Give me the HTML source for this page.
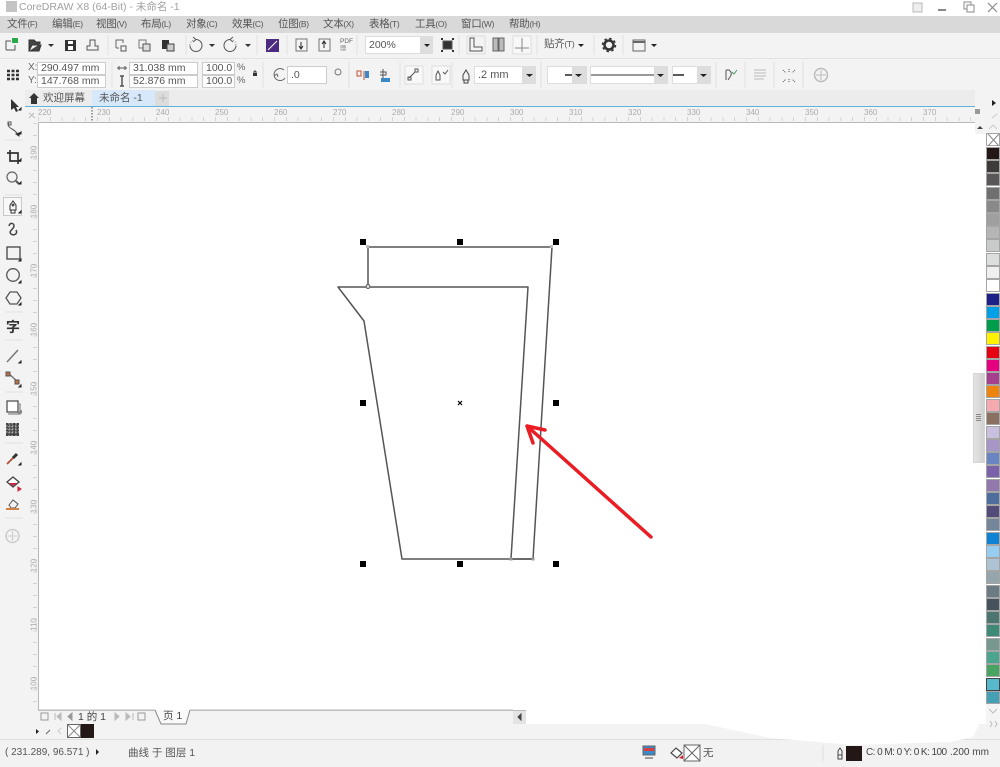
<!DOCTYPE html>
<html><head><meta charset="utf-8"><style>
html,body{margin:0;padding:0;background:#fff}
#p{position:relative;width:1000px;height:767px;overflow:hidden;background:#fff;font-family:"Liberation Sans","Noto Sans CJK SC",sans-serif;color:#444;filter:blur(.3px)}
#p div{position:absolute}
.t{white-space:nowrap;line-height:12px}
.m{top:18px;font-size:10.5px;color:#555;white-space:nowrap;line-height:13px;letter-spacing:-.3px}
.m i{font-style:normal;font-size:8.5px}
.in{background:#fff;border:1px solid #ccc;box-sizing:border-box;font-size:10.5px;line-height:12px;color:#555;padding-left:3px;white-space:nowrap}
.dd{background:#ddd;box-sizing:border-box}
.rh{top:108px;font-size:8px;color:#aaa;line-height:9px}
.rv{left:26px;font-size:8px;color:#aaa;line-height:9px;transform:rotate(-90deg);width:16px;text-align:center}
.s{left:986px;width:14px;height:13px;box-sizing:border-box;border:1px solid #a5a5a5}
svg{position:absolute;left:0;top:0}
</style></head><body><div id="p">
<!-- bars -->
<div style="left:0;top:16px;width:1000px;height:17px;background:#d9d9d9"></div>
<div style="left:0;top:33px;width:1000px;height:25px;background:#f3f3f3;border-bottom:1px solid #e2e2e2"></div>
<div style="left:0;top:59px;width:1000px;height:31px;background:#f3f3f3"></div>
<div style="left:25px;top:90px;width:950px;height:16px;background:#ececec"></div>
<div style="left:25px;top:106px;width:950px;height:1px;background:#5fb3d6"></div>
<div style="left:0;top:90px;width:25px;height:635px;background:#f3f3f3"></div>
<div style="left:25px;top:107px;width:950px;height:15px;background:#f3f3f3"></div>
<div style="left:25px;top:107px;width:13px;height:618px;background:#f3f3f3"></div>
<div style="left:38px;top:122px;width:938px;height:1px;background:#b8b8b8"></div>
<div style="left:38px;top:122px;width:1px;height:588px;background:#b8b8b8"></div>
<div style="left:38px;top:117px;width:937px;height:4px;background:repeating-linear-gradient(90deg,#d4d4d4 0 1px,transparent 1px 11.8px)"></div>
<div style="left:33px;top:123px;width:4px;height:587px;background:repeating-linear-gradient(180deg,#d4d4d4 0 1px,transparent 1px 11.8px)"></div>
<!-- right strip -->
<div style="left:975px;top:90px;width:12px;height:44px;background:#f3f3f3"></div>
<div style="left:986px;top:90px;width:14px;height:43px;background:#f3f3f3"></div>
<div style="left:986px;top:704px;width:14px;height:36px;background:#f5f5f5"></div>
<div style="left:973px;top:373px;width:12px;height:90px;background:linear-gradient(90deg,#e4e4e4,#d0d0d0);border:1px solid #d5d5d5;box-sizing:border-box"></div>
<div style="left:976px;top:414px;width:5px;height:8px;background:repeating-linear-gradient(180deg,#888 0 1px,transparent 1px 2px)"></div>
<!-- title -->
<div style="left:6px;top:1px;width:11px;height:11px;background:#c4c4c4"></div>
<div class="t" style="left:19px;top:1px;font-size:10.5px;color:#a0a0a0">CoreDRAW X8 (64-Bit) - 未命名 -1</div>
<!-- menu -->
<div class="m" style="left:7px">文件<i>(F)</i></div><div class="m" style="left:52px">编辑<i>(E)</i></div><div class="m" style="left:96px">视图<i>(V)</i></div><div class="m" style="left:141px">布局<i>(L)</i></div><div class="m" style="left:186px">对象<i>(C)</i></div><div class="m" style="left:232px">效果<i>(C)</i></div><div class="m" style="left:278px">位图<i>(B)</i></div><div class="m" style="left:323px">文本<i>(X)</i></div><div class="m" style="left:369px">表格<i>(T)</i></div><div class="m" style="left:415px">工具<i>(O)</i></div><div class="m" style="left:461px">窗口<i>(W)</i></div><div class="m" style="left:509px">帮助<i>(H)</i></div>
<!-- toolbar text/inputs -->
<div class="t" style="left:340px;top:38px;font-size:6.5px;line-height:7px;color:#666">PDF<br>▦</div>
<div class="in" style="left:365px;top:36px;width:56px;height:18px;line-height:16px;border-color:#ddd">200%</div>
<div class="dd" style="left:420px;top:36px;width:13px;height:18px"></div>
<div class="m" style="left:544px;top:38px">贴齐<i>(T)</i></div>
<!-- property bar -->
<div class="t" style="left:28px;top:62px;font-size:10px;color:#666">X:</div>
<div class="t" style="left:28px;top:75px;font-size:10px;color:#666">Y:</div>
<div class="in" style="left:37px;top:62px;width:69px;height:13px;line-height:11px">290.497 mm</div>
<div class="in" style="left:37px;top:75px;width:69px;height:13px;line-height:11px">147.768 mm</div>
<div class="in" style="left:129px;top:62px;width:69px;height:13px;line-height:11px">31.038 mm</div>
<div class="in" style="left:129px;top:75px;width:69px;height:13px;line-height:11px">52.876 mm</div>
<div class="in" style="left:202px;top:62px;width:33px;height:13px;line-height:11px">100.0</div>
<div class="in" style="left:202px;top:75px;width:33px;height:13px;line-height:11px">100.0</div>
<div class="t" style="left:237px;top:62px;font-size:9.5px;color:#666">%</div>
<div class="t" style="left:237px;top:75px;font-size:9.5px;color:#666">%</div>
<div class="in" style="left:287px;top:66px;width:40px;height:18px;line-height:16px">.0</div>
<div class="in" style="left:474px;top:66px;width:49px;height:18px;line-height:16px;font-size:11px;border-color:#ddd">.2 mm</div>
<div class="dd" style="left:522px;top:66px;width:14px;height:18px"></div>
<div class="in" style="left:547px;top:66px;width:40px;height:18px;border-color:#ddd"></div>
<div class="dd" style="left:572px;top:66px;width:14px;height:18px"></div>
<div class="in" style="left:590px;top:66px;width:78px;height:18px;border-color:#ddd"></div>
<div class="dd" style="left:654px;top:66px;width:14px;height:18px"></div>
<div class="in" style="left:672px;top:66px;width:39px;height:18px;border-color:#ddd"></div>
<div class="dd" style="left:697px;top:66px;width:14px;height:18px"></div>
<!-- tabs -->
<div style="left:92px;top:90px;width:63px;height:16px;background:#d6e8fa"></div>
<div style="left:155px;top:91px;width:14px;height:15px;background:#dcdcdc"></div>
<div class="t" style="left:43px;top:92px;font-size:10.5px;color:#555">欢迎屏幕</div>
<div class="t" style="left:99px;top:92px;font-size:10.5px;color:#555">未命名 -1</div>
<!-- rulers -->
<div class="rh" style="left:38px">220</div><div class="rh" style="left:97px">230</div><div class="rh" style="left:156px">240</div><div class="rh" style="left:215px">250</div><div class="rh" style="left:274px">260</div><div class="rh" style="left:333px">270</div><div class="rh" style="left:392px">280</div><div class="rh" style="left:451px">290</div><div class="rh" style="left:510px">300</div><div class="rh" style="left:569px">310</div><div class="rh" style="left:628px">320</div><div class="rh" style="left:687px">330</div><div class="rh" style="left:746px">340</div><div class="rh" style="left:805px">350</div><div class="rh" style="left:864px">360</div><div class="rh" style="left:923px">370</div>
<div class="rv" style="top:148px">190</div><div class="rv" style="top:207px">180</div><div class="rv" style="top:266px">170</div><div class="rv" style="top:325px">160</div><div class="rv" style="top:384px">150</div><div class="rv" style="top:443px">140</div><div class="rv" style="top:502px">130</div><div class="rv" style="top:561px">120</div><div class="rv" style="top:620px">110</div><div class="rv" style="top:679px">100</div>
<!-- page nav -->
<div style="left:38px;top:710px;width:488px;height:14px;background:#f3f3f3;border-top:1px solid #bbb;box-sizing:border-box"></div>
<div style="left:513px;top:711px;width:13px;height:13px;background:#e4e4e4"></div>
<!-- bottom -->
<div style="left:0;top:724px;width:1000px;height:16px;background:#f3f3f3"></div>
<div style="left:0;top:739px;width:1000px;height:28px;background:#f2f2f2;border-top:1px solid #e0e0e0;box-sizing:border-box"></div>
<div style="left:67px;top:724px;width:14px;height:14px;background:#fff;border:1px solid #666;box-sizing:border-box"></div>
<div style="left:81px;top:724px;width:13px;height:14px;background:#231815"></div>
<!-- palette -->
<div class="s" style="top:133px;background:#fff"></div>
<div class="s" style="top:147px;background:#231815"></div>
<div class="s" style="top:160px;background:#3e3a39"></div>
<div class="s" style="top:173px;background:#595757"></div>
<div class="s" style="top:187px;background:#717071"></div>
<div class="s" style="top:200px;background:#898989"></div>
<div class="s" style="top:213px;background:#9f9fa0"></div>
<div class="s" style="top:226px;background:#b5b5b6"></div>
<div class="s" style="top:239px;background:#c9caca"></div>
<div class="s" style="top:253px;background:#dcdddd"></div>
<div class="s" style="top:266px;background:#efefef"></div>
<div class="s" style="top:279px;background:#fff"></div>
<div class="s" style="top:293px;background:#1d2088"></div>
<div class="s" style="top:306px;background:#00a0e9"></div>
<div class="s" style="top:319px;background:#009e4c"></div>
<div class="s" style="top:332px;background:#fff100"></div>
<div class="s" style="top:346px;background:#e60012"></div>
<div class="s" style="top:359px;background:#e4007f"></div>
<div class="s" style="top:372px;background:#a4408e"></div>
<div class="s" style="top:385px;background:#ee8310"></div>
<div class="s" style="top:399px;background:#f5aab0"></div>
<div class="s" style="top:412px;background:#8a7060"></div>
<div class="s" style="top:426px;background:#c9bfdf"></div>
<div class="s" style="top:439px;background:#a795c7"></div>
<div class="s" style="top:452px;background:#6a86c2"></div>
<div class="s" style="top:465px;background:#7a62aa"></div>
<div class="s" style="top:479px;background:#9278ac"></div>
<div class="s" style="top:492px;background:#4e6c9c"></div>
<div class="s" style="top:505px;background:#544c78"></div>
<div class="s" style="top:518px;background:#73869a"></div>
<div class="s" style="top:532px;background:#0f84d4"></div>
<div class="s" style="top:545px;background:#96cdf0"></div>
<div class="s" style="top:558px;background:#adc2d2"></div>
<div class="s" style="top:571px;background:#94a5ac"></div>
<div class="s" style="top:585px;background:#6c7a82"></div>
<div class="s" style="top:598px;background:#46525c"></div>
<div class="s" style="top:611px;background:#4c7570"></div>
<div class="s" style="top:624px;background:#3f8a76"></div>
<div class="s" style="top:638px;background:#76988f"></div>
<div class="s" style="top:651px;background:#4aa48e"></div>
<div class="s" style="top:664px;background:#48a460"></div>
<div class="s" style="top:678px;background:#58b8cc;border-color:#444"></div>
<div class="s" style="top:691px;background:#44a0b4"></div>
<!-- watermark smear -->
<svg width="1000" height="767" viewBox="0 0 1000 767"><path d="M696 722L770 738L853 745L950 742L973 737L985 712V704H696Z" fill="#fff"/></svg>
<!-- icons + drawing -->
<svg width="1000" height="767" viewBox="0 0 1000 767" fill="none" stroke="#555" stroke-width="1">
<!-- window -->
<rect x="913" y="3" width="9" height="9" stroke="#bbb" fill="#eee"/><path d="M938 10h8" stroke="#888" stroke-width="2"/><rect x="964" y="2" width="7" height="7" stroke="#888"/><rect x="967" y="5" width="7" height="7" stroke="#888" fill="#fff"/><path d="M988 3l9 9M997 3l-9 9" stroke="#888" stroke-width="1.200"/>
<!-- toolbar -->
<path d="M6 50V41h5M6 50h9v-5" stroke="#555"/><rect x="12" y="38" width="6" height="5" fill="#2aa84a" stroke="none"/>
<path d="M29 51V40h5l2 2h4v2M29 51h10l2-6H32l-3 6z" fill="#444" stroke="#333"/><path d="M48 44h6l-3 3z" fill="#333" stroke="none"/>
<rect x="65" y="40" width="11" height="11" fill="#333" stroke="none"/><rect x="68" y="41" width="5" height="3" fill="#fff" stroke="none"/><rect x="68" y="46" width="5" height="4" fill="#fff" stroke="none"/>
<path d="M87 50h11v-4h-3V40h-5v6h-3z"/>
<path d="M116 48v-8h7v3M116 48h3" stroke="#666"/><rect x="121" y="46" width="5" height="5"/>
<rect x="139" y="40" width="7" height="8" stroke="#777"/><rect x="143" y="44" width="7" height="7" fill="#ddd" stroke="#555"/>
<rect x="162" y="40" width="7" height="9" fill="#333" stroke="none"/><rect x="167" y="44" width="7" height="7" fill="#ccc" stroke="#444"/>
<path d="M196 39.500a6 6 0 1 1-6 6" stroke="#555"/><path d="M190 45a6 6 0 0 1 3-5" stroke="#888" stroke-dasharray="1 1.500"/><path d="M193 37l3 2.500-3 2.500" stroke="#555"/><path d="M209 44h6l-3 3z" fill="#333" stroke="none"/>
<path d="M230 39.500a6 6 0 1 0 6 6" stroke="#555"/><path d="M236 45a6 6 0 0 0-3-5" stroke="#888" stroke-dasharray="1 1.500"/><path d="M233 37l-3 2.500 3 2.500" stroke="#555"/><path d="M245 44h6l-3 3z" fill="#333" stroke="none"/>
<rect x="266" y="39" width="13" height="13" fill="#4b2a80" stroke="none"/><path d="M268 50l9-9" stroke="#fff"/>
<rect x="296" y="39" width="11" height="12" stroke="#777"/><path d="M301 42v6M299 46l2 3 2-3" stroke="#222"/>
<rect x="319" y="39" width="11" height="12" stroke="#777"/><path d="M324 48v-6M322 44l2-3 2 3" stroke="#222"/>
<rect x="443" y="41" width="9" height="8" fill="#333" stroke="#555"/><path d="M441 39h2M452 39h2M441 51h2M452 51h2" stroke="#333" stroke-width="2"/>
<path d="M424 44h6l-3 3z" fill="#222" stroke="none"/>
<rect x="467" y="36" width="18" height="18" stroke="#ddd"/><path d="M470 38v13h12v-4h-8v-9z" stroke="#555"/>
<rect x="493" y="38" width="5" height="13" stroke="#666" fill="#bbb"/><rect x="499" y="38" width="5" height="13" stroke="#666" fill="#bbb"/>
<rect x="513" y="36" width="18" height="18" stroke="#ddd" fill="#f8f8f8"/><path d="M522 38v14M515 48h14" stroke="#888"/>
<path d="M578 44h6l-3 3z" fill="#222" stroke="none"/>
<circle cx="609" cy="45" r="4.500" stroke="#333" stroke-width="2.500"/><circle cx="609" cy="45" r="6.500" stroke="#333" stroke-width="1.500" stroke-dasharray="2.500 2.600"/>
<rect x="633" y="40" width="12" height="11" stroke="#666"/><path d="M633 42h12" stroke="#666" stroke-width="2"/>
<path d="M651 44h6l-3 3z" fill="#222" stroke="none"/>
<!-- separators -->
<path d="M108 35v20M186 35v20M257 35v20M287 35v20M357 35v20M459 35v20M537 35v20M594 35v20M623 35v20" stroke="#e2e2e2"/>
<path d="M112 62v26M263 62v26M349 62v26M400 62v26M452 62v26M541 62v26M716 62v26M745 62v26M774 62v26M803 62v26" stroke="#e2e2e2"/>
<!-- props -->
<path d="M7 71h12M7 75h12M7 79h12" stroke="#333" stroke-width="2.500" stroke-dasharray="3 1.500"/>
<path d="M117 68h10M119 66v4M125 66v4" stroke="#555"/><path d="M122 76v10M120 76h4M120 86h4" stroke="#555" stroke-width="1.500"/>
<rect x="253" y="73" width="4" height="3" fill="#333" stroke="none"/><path d="M254 73v-1a1 1 0 0 1 2 0v1" stroke="#333"/>
<path d="M284 70a6 6 0 1 0 1 8M274 76l3-2 1 3" stroke="#666"/>
<circle cx="338" cy="72" r="3" stroke="#777"/>
<path d="M357 71h4v5h-4zM364 71v9" stroke="#c05030"/><rect x="365" y="71" width="4" height="7" fill="#3a88c8" stroke="none"/>
<path d="M383 69v13M380 72h6v3h-6" stroke="#555"/><rect x="381" y="78" width="9" height="4" fill="#3a88c8" stroke="none"/>
<rect x="405" y="66" width="18" height="18" stroke="#ddd" fill="#f8f8f8"/><path d="M409 78l6-6" stroke="#555"/><rect x="415" y="69" width="3" height="3"/><rect x="408" y="77" width="3" height="3"/>
<rect x="432" y="66" width="18" height="18" stroke="#ddd" fill="#f8f8f8"/><path d="M436 80v-5l2-4 2 4v5zM443 72l2 2 3-4" stroke="#555"/>
<path d="M463 80v-5l3-5 3 5v5zM464 80h4v3h-4z" stroke="#444"/>
<path d="M565 75h7" stroke="#222" stroke-width="1.500"/>
<path d="M591 75h63" stroke="#333"/><path d="M673 75h11" stroke="#222" stroke-width="1.500"/>
<path d="M575 74h7l-3.500 3zM657 74h7l-3.500 3zM700 74h7l-3.500 3zM526 74h7l-3.500 3z" fill="#222" stroke="none"/>
<path d="M726 70h3q4 3 1 7l-2 3M726 70v10" stroke="#555"/><path d="M732 72l2 2 3-4" stroke="#4a9a70"/>
<path d="M754 70h12M754 73h12M754 76h12M754 79h10" stroke="#bbb"/>
<path d="M783 70l3 3M795 70l-3 3M783 82l3-3M795 82l-3-3M789 69v4M789 79v4" stroke="#555" stroke-dasharray="1 1"/>
<circle cx="821" cy="75" r="6.500" stroke="#bbb" stroke-width="1.500"/><path d="M821 70v10M816 75h10" stroke="#bbb"/>
<!-- tab home -->
<path d="M29 98l5-5 5 5h-2v6h-6v-6z" fill="#333" stroke="none"/>
<path d="M159 98h8M163 94v8" stroke="#bbb"/>
<!-- right strip -->
<path d="M992 100l4 3-4 3z" fill="#222" stroke="none"/><path d="M992 118l5-4" stroke="#ccc"/><path d="M989 129l4-4 4 4" stroke="#ccc"/>
<path d="M975 109h5v5h-5z" fill="#999" stroke="none"/>
<path d="M977 129l3-3 3 3z" fill="#444" stroke="none"/>
<path d="M988 134l11 12M999 134l-11 12" stroke="#888"/>
<path d="M989 709l4 4 4-4M990 721l2 3-2 3M995 721l2 3-2 3" stroke="#bbb"/>
<!-- toolbox -->
<path d="M11 99v11l3-2 2 4 2-1-2-4h3z" fill="#333" stroke="none"/><path d="M19 110h2v-2z" fill="#222" stroke="#222"/>
<path d="M9 123c-2 3 1 5 3 6s4 3 5 4" stroke="#555"/><rect x="8" y="122" width="3" height="3" stroke="#555"/><path d="M16 134l3-1 0 3z" fill="#333" stroke="#333"/>
<path d="M10 150v11h11M7 153h11v11" stroke="#333" stroke-width="1.700"/>
<circle cx="12" cy="177" r="5" stroke="#666" stroke-width="1.200"/><path d="M16 181l3 3" stroke="#555" stroke-width="2"/>
<rect x="3.500" y="197.500" width="18" height="18" stroke="#c8c8c8" fill="#f8f8f8"/><path d="M10 210v-5l3-4 3 4v5zM11 210h4v3h-4z" stroke="#333"/><circle cx="13" cy="205" r="1" fill="#333"/>
<path d="M19 213h2v-2z" fill="#222" stroke="#222"/>
<path d="M9 226c1-4 5-3 5 0 0 3-6 5-3 8 3 2 7 0 5-4" stroke="#444" stroke-width="1.500"/>
<rect x="7" y="247" width="13" height="12" stroke="#444" stroke-width="1.300"/>
<circle cx="13" cy="275" r="6.300" stroke="#555" stroke-width="1.300"/>
<path d="M10 292h7l4 6-4 6h-7l-4-6z" stroke="#555" stroke-width="1.300"/>
<path d="M19 261h2v-2zM19 283h2v-2zM19 305h2v-2zM19 134h2v-2zM19 161h2v-2zM19 184h2v-2zM19 363h2v-2zM19 387h2v-2zM19 413h2v-2zM19 465h2v-2z" fill="#222" stroke="#222"/>
<path d="M7 362l11-12" stroke="#777" stroke-width="1.500"/>
<path d="M8 373l10 9" stroke="#666" stroke-width="1.200"/><rect x="6" y="372" width="4" height="4" fill="#c07040" stroke="#555"/><rect x="15" y="380" width="4" height="4" fill="#c07040" stroke="#555"/>
<rect x="7" y="401" width="11" height="11" stroke="#444" fill="#fff" stroke-width="1.200"/><path d="M18 404h2v10H9v-2" stroke="#999" stroke-width="1.500"/>
<rect x="6" y="423" width="13" height="13" fill="#444" stroke="none"/><path d="M6 426h13M6 429h13M6 432h13M9 423v13M12 423v13M16 423v13" stroke="#ccc" stroke-dasharray="1.500 1.500"/>
<path d="M7 464l7-7" stroke="#b05030" stroke-width="1.800"/><path d="M13 458l4-4" stroke="#333" stroke-width="3"/>
<path d="M7 482l6-5 6 5-6 5z" stroke="#444" fill="#fff" stroke-width="1.300"/><path d="M9 483h8l-4 3z" fill="#d02040" stroke="none"/><path d="M18 487l3 2-3 2z" fill="#d02040" stroke="#d02040"/>
<path d="M9 505l4-5 5 4-3 4h-4z" stroke="#555"/><path d="M6 509h13" stroke="#d08040" stroke-width="2"/>
<circle cx="12.500" cy="536" r="6.500" stroke="#ccc" stroke-width="1.500"/><path d="M12.500 531v10M7.500 536h10" stroke="#ccc"/>
<path d="M5 140h18M5 195h18M5 312h18M5 340h18M5 392h18M5 443h18M5 518h18" stroke="#e0e0e0"/>
<!-- corner ruler -->
<path d="M29 113l6 5M29 118l5-5" stroke="#bbb"/>
<path d="M92 107v14" stroke="#444" stroke-dasharray="1.500 1.500"/>
<!-- page nav icons -->
<rect x="41" y="713" width="7" height="7" stroke="#999"/><path d="M55 713v7M61 713l-4 3.500 4 3.500z" stroke="#bbb" fill="#bbb"/><path d="M72 713l-4 3.500 4 3.500z" fill="#999" stroke="#999"/>
<path d="M115 713l4 3.500-4 3.500z" fill="#bbb" stroke="#bbb"/><path d="M126 713l4 3.500-4 3.500zM133 713v7" stroke="#bbb" fill="#bbb"/><rect x="138" y="713" width="7" height="7" stroke="#999"/>
<path d="M155 710l6 14h25l4-14" stroke="#888" fill="#fafafa"/><path d="M38 710h117M190 710h323" stroke="#bbb"/>
<path d="M521 714l-3 3 3 3z" fill="#444" stroke="#444"/>
<!-- colour strip -->
<path d="M36 729l3 2.500-3 2.500z" fill="#222" stroke="none"/><path d="M46 734l4-4" stroke="#666"/><path d="M61 728l-3 3 3 3" stroke="#ccc"/><path d="M68 725l12 12M80 725l-12 12" stroke="#888"/>
<path d="M96 749l3 3-3 3z" fill="#222" stroke="none"/>
<!-- status icons -->
<rect x="643" y="746" width="12" height="9" fill="#3a88c8" stroke="#666"/><rect x="644" y="748" width="10" height="3" fill="#d84040" stroke="none"/><path d="M645 758h8" stroke="#444"/>
<path d="M671 753l5-5 6 5-5 5z" stroke="#444" fill="#fff" stroke-width="1.200"/><path d="M679 758l4-3v4z" fill="#e02030" stroke="none"/>
<rect x="684" y="745" width="16" height="16" stroke="#666" fill="#fff"/><path d="M684 745l16 16M700 745l-16 16" stroke="#666"/>
<path d="M823 745v16" stroke="#ddd"/>
<path d="M838 755v-4l2-3 2 3v4zM838 755h4v4h-4z" stroke="#444"/>
<!-- drawing -->
<g stroke="#555" stroke-width="1.500" stroke-linejoin="round">
<path d="M368 247H552L533 559H402L364 321L338 287H528L511 559"/>
<path d="M368 247V287"/><path d="M511 559H533"/>
</g>
<circle cx="368" cy="286.500" r="2" stroke="#555" fill="#ddd"/>
<rect x="366" y="245" width="3" height="3" fill="#bbb" stroke="none"/><rect x="550" y="245" width="3" height="3" fill="#bbb" stroke="none"/><rect x="509.500" y="557.500" width="3" height="3" fill="#999" stroke="none"/><rect x="531.500" y="557.500" width="3" height="3" fill="#999" stroke="none"/>
<g fill="#000" stroke="none">
<rect x="360" y="239" width="6" height="6"/><rect x="457" y="239" width="6" height="6"/><rect x="553" y="239" width="6" height="6"/>
<rect x="360" y="400" width="6" height="6"/><rect x="553" y="400" width="6" height="6"/>
<rect x="360" y="561" width="6" height="6"/><rect x="457" y="561" width="6" height="6"/><rect x="553" y="561" width="6" height="6"/>
</g>
<path d="M458 401l4 4M462 401l-4 4" stroke="#000" stroke-width="1.200"/>
<path d="M651 537L527 426M527 426L545 430M527 426L533 443" stroke="#ea1c24" stroke-width="3.500" stroke-linecap="round" stroke-linejoin="round"/>
</svg>
<!-- text above icons -->
<div class="t" style="left:6px;top:319px;font-size:14px;line-height:16px;font-weight:bold;color:#333">字</div>
<div class="t" style="left:78px;top:711px;font-size:10.5px;color:#444">1 的 1</div>
<div class="t" style="left:163px;top:710px;font-size:10.5px;color:#444">页 1</div>
<div class="t" style="left:5px;top:747px;font-size:10px;color:#555">( 231.289, 96.571 )</div>
<div class="t" style="left:128px;top:747px;font-size:10.5px;color:#555">曲线 于 图层 1</div>
<div class="t" style="left:703px;top:747px;font-size:10.5px;color:#555">无</div>
<div style="left:846px;top:746px;width:16px;height:15px;background:#231815"></div>
<div class="t" style="left:866px;top:747px;font-size:10px;letter-spacing:-.55px;color:#444">C: 0 M: 0 Y: 0 K: 100</div>
<div class="t" style="left:950px;top:747px;font-size:10px;color:#444">.200 mm</div>
</div></body></html>
